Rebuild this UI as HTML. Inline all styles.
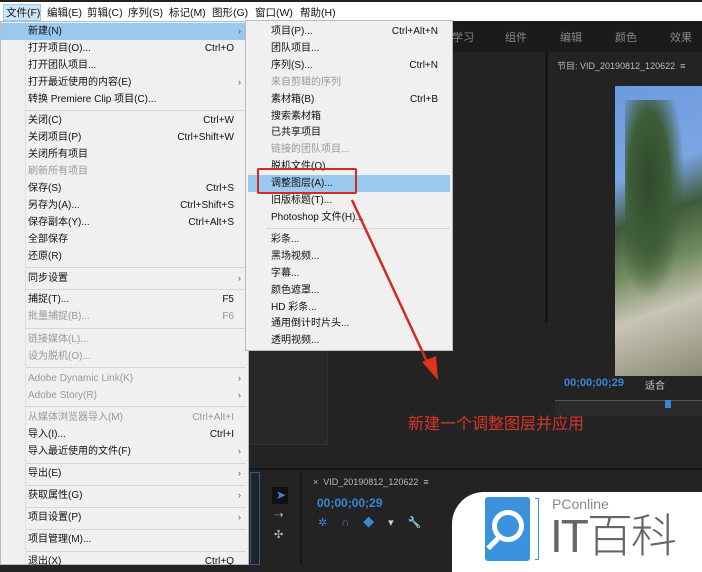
<!DOCTYPE html>
<html><head><meta charset="utf-8"><style>
*{margin:0;padding:0;box-sizing:border-box}
body{width:702px;height:565px;overflow:hidden;background:#232323;position:relative;font-family:"Liberation Sans","Noto Sans CJK SC",sans-serif;font-size:10px;color:#111}
.abs{position:absolute}
.mb{left:0;top:0;width:702px;height:21px;background:#fff;border-top:2px solid #222}
.mb span{position:absolute;top:3px;font-size:10.5px}
.menu{background:#f0f0f0;border:1px solid #bbb}
.it{position:absolute;left:0;right:0;height:17px;line-height:17px;white-space:nowrap}
.it .t{position:absolute;left:27px}
.it .s{position:absolute;right:14px}
.it .a{position:absolute;right:7px;font-size:9px;color:#555}
.g{color:#999}
.hl{background:#99c9ef}
.sep{position:absolute;left:25px;right:2px;height:1px;background:#d6d6d6}
.tab{position:absolute;top:29px;color:#888;font-size:11px}
</style></head><body>
<div class="abs mb">
<div class="abs" style="left:3px;top:2px;width:38px;height:17px;background:#cce4f7;border:1px solid #99c9ef"></div>
<span style="left:6px">文件(F)</span><span style="left:47px">编辑(E)</span><span style="left:87px">剪辑(C)</span><span style="left:128px">序列(S)</span><span style="left:169px">标记(M)</span><span style="left:212px">图形(G)</span><span style="left:255px">窗口(W)</span><span style="left:300px">帮助(H)</span>
</div>
<div class="abs" style="left:452px;top:21px;width:250px;height:31px;background:#1b1b1b"></div>
<div class="tab" style="left:452px">学习</div><div class="tab" style="left:505px">组件</div><div class="tab" style="left:560px">编辑</div><div class="tab" style="left:615px">颜色</div><div class="tab" style="left:670px">效果</div>
<div class="abs" style="left:545px;top:52px;width:3px;height:270px;background:#161616"></div>
<div class="abs" style="left:557px;top:59px;color:#bbb;font-size:9px">节目: VID_20190812_120622 &nbsp;≡</div>
<div class="abs" style="left:615px;top:86px;width:87px;height:290px;background:linear-gradient(160deg,#6d9be0 0%,#7aa5e3 30%,#3e5a3a 45%,#6f8a5e 60%,#c9c4b5 75%,#8a8c76 100%)"></div>
<div class="abs" style="left:625px;top:100px;width:60px;height:200px;background:radial-gradient(ellipse at 40% 40%,#2f4a2c 0%,#3e5d38 40%,transparent 70%)"></div>
<div class="abs" style="left:564px;top:377px;color:#3a86d6;font-size:11px;font-weight:bold">00;00;00;29</div>
<div class="abs" style="left:645px;top:377px;color:#ccc;font-size:10px">适合</div>
<div class="abs" style="left:555px;top:400px;width:147px;height:16px;background:#2a2a2a;border-top:1px solid #555"></div>
<div class="abs" style="left:665px;top:400px;width:6px;height:8px;background:#3a86d6"></div>
<div class="abs" style="left:408px;top:410px;color:#d8352a;font-size:16px">新建一个调整图层并应用</div>
<div class="abs" style="left:250px;top:350px;width:78px;height:95px;background:#282828;border-right:1px solid #333;border-bottom:1px solid #333"></div>
<div class="abs" style="left:248px;top:468px;width:454px;height:2px;background:#151515"></div>
<div class="abs" style="left:250px;top:472px;width:10px;height:93px;border:1px solid #2a5e9a"></div>
<div class="abs" style="left:300px;top:470px;width:2px;height:95px;background:#181818"></div>
<div class="abs" style="left:272px;top:487px;width:16px;height:17px;background:#111"></div>
<div class="abs" style="left:276px;top:488px;color:#3a86d6;font-size:12px">➤</div>
<div class="abs" style="left:275px;top:510px;color:#bbb;font-size:10px">⇢</div>
<div class="abs" style="left:274px;top:528px;color:#bbb;font-size:11px">✣</div>
<div class="abs" style="left:313px;top:477px;color:#bbb;font-size:9px">× &nbsp;VID_20190812_120622 &nbsp;≡</div>
<div class="abs" style="left:317px;top:496px;color:#3a86d6;font-size:12px;font-weight:bold">00;00;00;29</div>
<div class="abs" style="left:318px;top:514px;color:#3a86d6;font-size:11px;letter-spacing:14px">✲∩◆<span style="color:#ccc">▾🔧</span></div>
<div class="abs" style="left:452px;top:492px;width:260px;height:80px;background:#fff;border-top-left-radius:32px"></div>
<div class="abs" style="left:485px;top:497px;width:45px;height:64px;background:#3a93dc;border-radius:3px"></div>
<div class="abs" style="left:492px;top:510px;width:32px;height:32px;border:5px solid #fff;border-radius:50%"></div>
<div class="abs" style="left:486px;top:541px;width:14px;height:5px;background:#fff;transform:rotate(-45deg)"></div>
<div class="abs" style="left:535px;top:498px;width:4px;height:62px;border:1.5px solid #3a93dc;border-left:none"></div>
<div class="abs" style="left:552px;top:496px;color:#888;font-size:14px">PConline</div>
<div class="abs" style="left:550px;top:510px;color:#666;font-size:46px;line-height:52px;font-weight:300;letter-spacing:-2px">IT百科</div>
<div class="abs menu" style="left:0;top:21px;width:249px;height:544px">
<div class="abs" style="left:24px;top:0;width:1px;height:100%;background:#e0e0e0"></div>
<div class="it hl" style="top:1px"><span class="t">新建(N)</span><span class="a">›</span></div>
<div class="it" style="top:18px"><span class="t">打开项目(O)...</span><span class="s">Ctrl+O</span></div>
<div class="it" style="top:35px"><span class="t">打开团队项目...</span></div>
<div class="it" style="top:52px"><span class="t">打开最近使用的内容(E)</span><span class="a">›</span></div>
<div class="it" style="top:69px"><span class="t">转换 Premiere Clip 项目(C)...</span></div>
<div class="sep" style="top:88px"></div>
<div class="it" style="top:90px"><span class="t">关闭(C)</span><span class="s">Ctrl+W</span></div>
<div class="it" style="top:107px"><span class="t">关闭项目(P)</span><span class="s">Ctrl+Shift+W</span></div>
<div class="it" style="top:124px"><span class="t">关闭所有项目</span></div>
<div class="it g" style="top:141px"><span class="t">刷新所有项目</span></div>
<div class="it" style="top:158px"><span class="t">保存(S)</span><span class="s">Ctrl+S</span></div>
<div class="it" style="top:175px"><span class="t">另存为(A)...</span><span class="s">Ctrl+Shift+S</span></div>
<div class="it" style="top:192px"><span class="t">保存副本(Y)...</span><span class="s">Ctrl+Alt+S</span></div>
<div class="it" style="top:209px"><span class="t">全部保存</span></div>
<div class="it" style="top:226px"><span class="t">还原(R)</span></div>
<div class="sep" style="top:245px"></div>
<div class="it" style="top:248px"><span class="t">同步设置</span><span class="a">›</span></div>
<div class="sep" style="top:267px"></div>
<div class="it" style="top:269px"><span class="t">捕捉(T)...</span><span class="s">F5</span></div>
<div class="it g" style="top:286px"><span class="t">批量捕捉(B)...</span><span class="s">F6</span></div>
<div class="sep" style="top:306px"></div>
<div class="it g" style="top:309px"><span class="t">链接媒体(L)...</span></div>
<div class="it g" style="top:326px"><span class="t">设为脱机(O)...</span></div>
<div class="sep" style="top:345px"></div>
<div class="it g" style="top:348px"><span class="t">Adobe Dynamic Link(K)</span><span class="a">›</span></div>
<div class="it g" style="top:365px"><span class="t">Adobe Story(R)</span><span class="a">›</span></div>
<div class="sep" style="top:384px"></div>
<div class="it g" style="top:387px"><span class="t">从媒体浏览器导入(M)</span><span class="s">Ctrl+Alt+I</span></div>
<div class="it" style="top:404px"><span class="t">导入(I)...</span><span class="s">Ctrl+I</span></div>
<div class="it" style="top:421px"><span class="t">导入最近使用的文件(F)</span><span class="a">›</span></div>
<div class="sep" style="top:441px"></div>
<div class="it" style="top:443px"><span class="t">导出(E)</span><span class="a">›</span></div>
<div class="sep" style="top:463px"></div>
<div class="it" style="top:465px"><span class="t">获取属性(G)</span><span class="a">›</span></div>
<div class="sep" style="top:485px"></div>
<div class="it" style="top:487px"><span class="t">项目设置(P)</span><span class="a">›</span></div>
<div class="sep" style="top:507px"></div>
<div class="it" style="top:509px"><span class="t">项目管理(M)...</span></div>
<div class="sep" style="top:529px"></div>
<div class="it" style="top:531px"><span class="t">退出(X)</span><span class="s">Ctrl+Q</span></div>
</div>
<div class="abs menu" style="left:245px;top:20px;width:208px;height:331px">
<div class="it" style="top:2px"><span class="t" style="left:25px">项目(P)...</span><span class="s">Ctrl+Alt+N</span></div>
<div class="it" style="top:19px"><span class="t" style="left:25px">团队项目...</span></div>
<div class="it" style="top:36px"><span class="t" style="left:25px">序列(S)...</span><span class="s">Ctrl+N</span></div>
<div class="it g" style="top:53px"><span class="t" style="left:25px">来自剪辑的序列</span></div>
<div class="it" style="top:70px"><span class="t" style="left:25px">素材箱(B)</span><span class="s">Ctrl+B</span></div>
<div class="it" style="top:87px"><span class="t" style="left:25px">搜索素材箱</span></div>
<div class="it" style="top:103px"><span class="t" style="left:25px">已共享项目</span></div>
<div class="it g" style="top:120px"><span class="t" style="left:25px">链接的团队项目...</span></div>
<div class="it" style="top:137px"><span class="t" style="left:25px">脱机文件(O)...</span></div>
<div class="it hl" style="top:154px;left:2px;right:2px"><span class="t" style="left:23px">调整图层(A)...</span></div>
<div class="it" style="top:171px"><span class="t" style="left:25px">旧版标题(T)...</span></div>
<div class="it" style="top:188px"><span class="t" style="left:25px">Photoshop 文件(H)...</span></div>
<div class="sep" style="top:207px;left:20px"></div>
<div class="it" style="top:210px"><span class="t" style="left:25px">彩条...</span></div>
<div class="it" style="top:227px"><span class="t" style="left:25px">黑场视频...</span></div>
<div class="it" style="top:244px"><span class="t" style="left:25px">字幕...</span></div>
<div class="it" style="top:261px"><span class="t" style="left:25px">颜色遮罩...</span></div>
<div class="it" style="top:278px"><span class="t" style="left:25px">HD 彩条...</span></div>
<div class="it" style="top:294px"><span class="t" style="left:25px">通用倒计时片头...</span></div>
<div class="it" style="top:311px"><span class="t" style="left:25px">透明视频...</span></div>
</div>
<div class="abs" style="left:257px;top:168px;width:100px;height:26px;border:2px solid #d42a22;border-radius:2px"></div>
<svg class="abs" style="left:0;top:0" width="702" height="565"><line x1="352" y1="200" x2="430" y2="368" stroke="#d42a22" stroke-width="2.5"/><polygon points="422,362 438,380 436,356" fill="#e0321f"/></svg>
</body></html>
